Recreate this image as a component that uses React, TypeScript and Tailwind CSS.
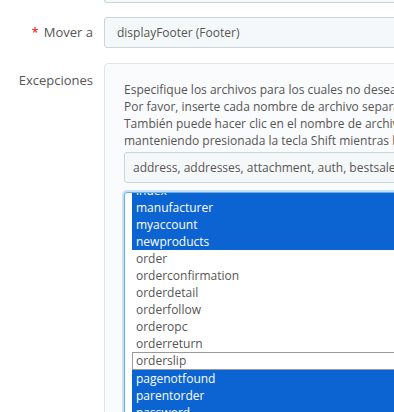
import React from "react";

const selectedTop = ["index", "manufacturer", "myaccount", "newproducts"];
const plain = ["order", "orderconfirmation", "orderdetail", "orderfollow", "orderopc", "orderreturn"];
const selectedBottom = ["pagenotfound", "parentorder", "password"];

export default function App() {
  return (
    <div
      className="w-[394px] h-[412px] overflow-hidden bg-white text-[12px] text-[#555]"
      style={{ fontFamily: '"Open Sans", "Noto Sans", sans-serif' }}
    >
      {/* bottom of previous input */}
      <div className="flex">
        <div className="w-[104px] shrink-0" />
        <div className="flex-1 h-[3px] bg-[#f5f8f9] border-x border-b border-[#c7d6db] rounded-b-[3px] mr-[-8px]" />
      </div>

      {/* Mover a */}
      <div className="flex items-center mt-[14px]">
        <div className="w-[104px] shrink-0 pr-[11px] text-right text-[13px] text-[#555] whitespace-nowrap">
          <span className="text-[#e00] mr-[5px]">*</span>Mover a
        </div>
        <div className="flex-1 h-[31px] bg-[#f5f8f9] border border-[#c7d6db] rounded-[3px] mr-[-8px] flex items-center pl-[12px] whitespace-nowrap text-[#555]">
          displayFooter (Footer)
        </div>
      </div>

      {/* Excepciones */}
      <div className="flex mt-[15px]">
        <div className="w-[104px] shrink-0 pr-[11px] pt-[9px] text-right text-[13px] whitespace-nowrap leading-[17px]">
          Excepciones
        </div>
        <div className="flex-1 h-[400px] bg-[#fafbfc] border border-[#dfe5e9] rounded-[4px] mr-[-12px] pl-[19px] pt-[17px]">
          <div className="leading-[17px] whitespace-nowrap text-[#555]">
            <div>Especifique los archivos para los cuales no desea que se muestre el módulo.</div>
            <div>Por favor, inserte cada nombre de archivo separado por una coma (",").</div>
            <div>También puede hacer clic en el nombre de archivo en la lista para añadirlo.</div>
            <div>manteniendo presionada la tecla Shift mientras hace clic en los nombres.</div>
          </div>
          <div className="mt-[3px] h-[31px] bg-[#f5f8f9] border border-[#c7d6db] rounded-[3px] flex items-center pl-[8px] whitespace-nowrap text-[#555]">
            address, addresses, attachment, auth, bestsales, cart, category
          </div>
          <div className="mt-[9px] h-[260px] bg-white border border-[#66afe9] rounded-[3px] shadow-[0_0_0_2px_rgba(102,175,233,0.35)] pl-[7px] overflow-hidden">
            <div className="-mt-[11px] leading-[17px]">
              {selectedTop.map((t) => (
                <div key={t} className="h-[17px] bg-[#0b64d1] text-white pl-[4px] whitespace-nowrap">
                  {t}
                </div>
              ))}
              {plain.map((t) => (
                <div key={t} className="h-[17px] text-[#555] pl-[4px] whitespace-nowrap">
                  {t}
                </div>
              ))}
              <div className="h-[18px] border border-[#9a9a9a] text-[#555] pl-[3px] leading-[16px] whitespace-nowrap">
                orderslip
              </div>
              {selectedBottom.map((t) => (
                <div key={t} className="h-[17px] bg-[#0b64d1] text-white pl-[4px] whitespace-nowrap">
                  {t}
                </div>
              ))}
            </div>
          </div>
        </div>
      </div>
    </div>
  );
}
